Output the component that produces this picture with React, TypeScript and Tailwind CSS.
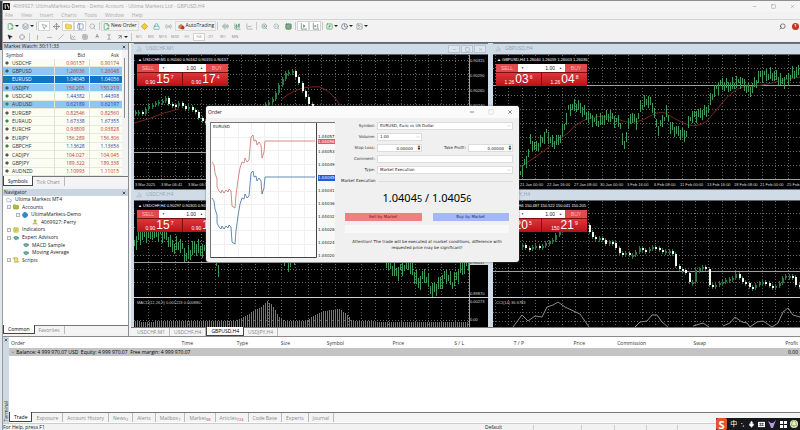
import { useState } from 'react';
import type { ReactNode } from 'react';
import {
  ArrowUpRight, AudioLines, Bell, BarChart2, ChartCandlestick, ChartLine, ChevronDown, Clock, Cloud, Crosshair,
  Diamond, FilePlus2, Folder, Globe, GraduationCap, Grid2x2, Grid3x3, Image, Layers, LineChart, Lock, Mic, Minus,
  MousePointer2, Move, PanelLeft, Radio, ScrollText, Search, Slash, Square, SquareFunction, TextCursor, User, X,
  ZoomIn, ZoomOut,
} from 'lucide-react';

type Quote = { symbol: string; bid: string; ask: string; up?: boolean; hl?: 'soft' | 'strong' };

const quotes: Quote[] = [
  { symbol: 'USDCHF', bid: '0.90157', ask: '0.90174' },
  { symbol: 'GBPUSD', bid: '1.26036', ask: '1.26048', hl: 'soft' },
  { symbol: 'EURUSD', bid: '1.04045', ask: '1.04056', hl: 'strong' },
  { symbol: 'USDJPY', bid: '150.205', ask: '150.219', hl: 'soft' },
  { symbol: 'USDCAD', bid: '1.44382', ask: '1.44398', up: true },
  { symbol: 'AUDUSD', bid: '0.62189', ask: '0.62197', up: true, hl: 'soft' },
  { symbol: 'EURGBP', bid: '0.82546', ask: '0.82560' },
  { symbol: 'EURAUD', bid: '1.67338', ask: '1.67355', up: true },
  { symbol: 'EURCHF', bid: '0.93809', ask: '0.93828' },
  { symbol: 'EURJPY', bid: '156.289', ask: '156.306' },
  { symbol: 'GBPCHF', bid: '1.13628', ask: '1.13656', up: true },
  { symbol: 'CADJPY', bid: '104.027', ask: '104.045' },
  { symbol: 'GBPJPY', bid: '189.322', ask: '189.338' },
  { symbol: 'AUDNZD', bid: '1.10993', ask: '1.11015' },
];

const usdchfLeft = [57, 57, 59, 54, 51, 50, 48, 47, 46, 43, 49, 50, 51, 48, 51, 54, 52, 55, 57, 63, 66, 67];
const usdchfRight = [49, 47, 44, 38, 30, 24, 18, 17, 16, 22, 28, 36, 42, 49, 52];
const usdjpy = [
  44, 47, 48, 46, 45, 46, 45, 42, 41, 39, 34, 30, 28, 26, 25, 24, 22, 21, 22, 24, 31, 36, 38, 37, 39, 43, 41, 42, 47, 52,
  53, 52, 54, 54, 51, 47, 49, 50, 48, 46, 47, 49, 51, 50, 50, 53, 65, 68, 69, 72, 81, 81, 69, 68, 66, 68, 84, 85, 84, 82,
  81, 79, 78, 77, 73, 77, 81, 82, 86, 87, 84, 82, 81, 82, 85, 86, 85, 82, 77, 75, 75, 76, 84, 85,
];
const gbpusd: number[][] = [
  [27, 118], [34, 103], [37, 86], [42, 93], [47, 88], [53, 78], [59, 88], [65, 86], [70, 75], [75, 54], [84, 50], [94, 61],
  [104, 67], [117, 61], [127, 69], [130, 94], [137, 62], [144, 67], [147, 52], [154, 45], [160, 52], [164, 76], [174, 56],
  [177, 72], [192, 81], [197, 62], [214, 56], [220, 37], [227, 29], [237, 31], [247, 26], [257, 36], [267, 20], [280, 20],
  [290, 27], [300, 19], [307, 15],
];
const usdchfH4: number[][] = [
  [0, 42], [8, 33], [24, 32], [32, 34], [38, 46], [46, 44], [52, 56], [60, 46], [70, 50], [78, 44], [84, 68], [90, 42],
  [120, 30], [155, 62], [170, 40], [230, 40], [252, 60], [262, 72], [274, 62], [284, 82], [290, 74], [298, 90], [306, 82],
  [312, 74], [318, 82], [326, 70], [334, 60],
];
const macd: number[][] = [
  [0, 6], [10, 5], [30, 6], [100, 6], [106, 8], [116, 14], [126, 19], [133, 26], [138, 22], [145, 10], [150, 6], [172, 6],
  [180, 12], [190, 16], [205, 18], [212, 13], [218, 6], [260, 5], [334, 5],
];
const tickRed: number[][] = [
  [1, 39], [3, 42], [4, 50], [6, 56], [6, 64], [8, 68], [10, 70], [11, 67], [13, 70], [15, 67], [17, 69], [18, 66], [20, 68],
  [21, 83], [24, 85], [25, 72], [27, 57], [29, 45], [31, 39], [33, 40], [34, 35], [36, 39], [38, 37], [40, 14], [42, 12],
  [43, 18], [45, 17], [46, 22], [48, 19], [50, 22], [51, 35], [53, 29], [54, 18], [104, 18],
];

function at(points: number[][], x: number) {
  for (let i = 1; i < points.length; i++) {
    const [x0, y0] = points[i - 1];
    const [x1, y1] = points[i];
    if (x <= x1) return y0 + ((y1 - y0) * (x - x0)) / (x1 - x0);
  }
  return points[points.length - 1][1];
}

const toLine = (points: number[][], dy = 0) => points.map(([x, y]) => `${x},${y + dy}`).join(' ');

function Candles({ data, x }: { data: number[]; x: number }) {
  return (
    <g shapeRendering="crispEdges">
      {data.map((y, i) => {
        const prev = i ? data[i - 1] : y;
        const down = y > prev;
        const cx = Math.round(x + (i * 10) / 3);
        const top = Math.min(prev, y);
        const h = Math.max(Math.abs(y - prev), 2);
        return (
          <g key={i} fill={down ? '#eefbf0' : '#2a7a45'}>
            <rect x={cx} y={top - 2} width="1" height={h + 4} fill="#2a7a45" />
            <rect x={cx} y={top} width="2" height={h} />
          </g>
        );
      })}
    </g>
  );
}

function Bars({ points, amp }: { points: number[][]; amp: number }) {
  const start = points[0][0];
  const end = points[points.length - 1][0];
  const out: string[] = [];
  for (let x = start, i = 0; x <= end; x += 2, i++) {
    const y = Math.round(at(points, x) + Math.sin(i * 2.3) * amp * 0.6);
    const r = Math.round(amp * (0.5 + Math.abs(Math.sin(i * 1.7))));
    out.push(`M${x + 0.5} ${y - r}V${y + r}`);
  }
  return <path d={out.join('')} stroke="#3f9a5c" strokeWidth="1" fill="none" />;
}

function GridLines({ w, h, x, rows }: { w: number; h: number; x: number; rows: number[] }) {
  const cols = [];
  for (let c = x; c < w; c += 40 / 3) cols.push(Math.round(c) + 0.5);
  return (
    <g stroke="#666" strokeWidth="1" strokeDasharray="1 2">
      {cols.map((c) => <line key={c} x1={c} x2={c} y1="0" y2={h} />)}
      {rows.map((r) => <line key={r} x1="0" x2={w} y1={r + 0.5} y2={r + 0.5} />)}
    </g>
  );
}

function OneClick({ base, sell, buy }: { base: string; sell: string[]; buy: string[] }) {
  const cell = 'flex h-[13px] items-end justify-center bg-linear-to-b from-[#e0343a] to-[#b80f16] pb-px text-white';
  return (
    <div className="absolute left-[3px] top-[9px] grid w-[91px] grid-cols-2 gap-px bg-[#7c0d11]">
      <div className="col-span-2 flex h-2 text-[5px] leading-2">
        <button className="w-[22px] bg-[#e04a4d] text-[#ffb9b9]">SELL</button>
        <div className="flex flex-1 items-center bg-white px-[3px]">
          <span className="text-[3px] text-[#333]">▼</span>
          <input aria-label="Lots" defaultValue="1.00" className="h-2 w-0 flex-1 px-1 text-right text-[#222] outline-none" />
          <span className="text-[3px] text-[#333]">▲</span>
        </div>
        <button className="w-[22px] bg-[#e04a4d] text-[#ffb9b9]">BUY</button>
      </div>
      {[sell, buy].map(([big, small]) => (
        <div key={big} className={cell}>
          <span className="text-[5px] leading-[6px]">{base}</span>
          <span className="pl-px text-[12px] leading-3">{big}</span>
          <span className="self-start pl-px text-[5px] leading-2">{small}</span>
        </div>
      ))}
    </div>
  );
}

function ChartWindow({ title, info, panel, controls, children }: {
  title: string; info: string; panel: ReactNode; controls?: boolean; children: ReactNode;
}) {
  return (
    <section className="flex min-w-0 flex-col border-t border-[#6f7780] bg-[#cfdbe6]">
      <div className="flex h-[10px] items-center gap-1 px-[2px] text-[5px] text-[#94a5b5]">
        <BarChart2 className="size-[6px]" />
        <h2 className="flex-1">{title}</h2>
        {controls && (
          <div className="flex gap-px text-[#8794a2]">
            <button aria-label="Minimize chart" className="flex h-2 w-3 items-center justify-center border border-[#b9c5d1] bg-[#dde6ee]"><Minus className="size-[5px]" /></button>
            <button aria-label="Maximize chart" className="flex h-2 w-3 items-center justify-center border border-[#b9c5d1] bg-[#dde6ee]"><Square className="size-[5px]" /></button>
            <button aria-label="Close chart" className="flex h-2 w-3 items-center justify-center border border-[#b9c5d1] bg-[#dde6ee]"><X className="size-[5px]" /></button>
          </div>
        )}
      </div>
      <div className="relative flex-1 border-t border-[#5b636b] bg-black font-['Liberation_Sans',sans-serif]">
        {children}
        <p className="absolute left-[3px] top-[2px] whitespace-nowrap bg-black px-px text-[4px] leading-[6px] text-white">▲ {info}</p>
        {panel}
      </div>
    </section>
  );
}

function Axis({ items, top, gap }: { items: string[]; top: string; gap: string }) {
  return (
    <div className={`absolute bottom-0 right-0 flex w-[18px] flex-col text-[4px] leading-[5px] text-[#ddd] ${top} ${gap}`}>
      {items.map((v) => <span key={v} className={v === '0.90157' ? 'bg-[#d8d8d8] text-black' : ''}>{v}</span>)}
    </div>
  );
}

function TimeAxis({ items }: { items: string[] }) {
  return (
    <div className="absolute bottom-[2px] left-px right-0 flex overflow-hidden text-[4px] leading-[5px] text-[#ddd]">
      {items.map((v, i) => (
        <span key={v} className={`whitespace-nowrap ${i === items.length - 1 ? 'w-3' : i % 3 ? 'w-[27px] shrink-0' : 'w-[26px] shrink-0'}`}>{v}</span>
      ))}
    </div>
  );
}

function Tabs({ items, active, className = '' }: { items: [string, string?][]; active: string; className?: string }) {
  return (
    <div className={`flex items-stretch border-t border-[#777] bg-[#f4f4f4] text-[5px] leading-2 text-[#8a8a8a] ${className}`}>
      {items.map(([t, sub]) => (
        <button
          key={t}
          className={t === active ? '-mt-px whitespace-nowrap border-x border-b border-[#444] bg-white px-1 text-black' : 'whitespace-nowrap border-r border-[#bbb] px-1'}
        >
          {t}{sub && <sub className={`text-[4px] leading-none ${sub.length > 1 ? 'text-[#d33]' : ''}`}>{sub}</sub>}
        </button>
      ))}
    </div>
  );
}

const Sep = () => <span className="mx-px h-2 w-px bg-[#c8c8c8]" />;
const Tool = ({ label, children, on, drop }: { label: string; children: ReactNode; on?: boolean; drop?: boolean }) => (
  <button aria-label={label} className={`flex h-[10px] items-center justify-center ${drop ? 'w-[15px] gap-px' : 'w-3'} ${on ? 'border border-[#d4d4d4] bg-white' : ''}`}>
    {children}
    {drop && <svg viewBox="0 0 4 2" className="h-[2px] w-1"><path d="M0 0h4L2 2z" fill="#222" /></svg>}
  </button>
);

function Toolbars() {
  const i = 'size-[7px]';
  return (
    <div className="border-b border-[#5f6871] bg-[#f2f2f2]">
      <div className="flex h-3 items-center pl-[2px] text-[5px] text-[#222]">
        <Tool label="New chart" drop><FilePlus2 className={`${i} text-[#2c9a4a]`} /></Tool>
        <Tool label="Profiles" drop><Layers className={`${i} text-[#6f8298]`} /></Tool>
        <Sep />
        <Tool label="Market Watch" on><MousePointer2 className={`${i} text-[#6a8a7a]`} /></Tool>
        <Tool label="Data Window"><Move className={`${i} text-[#666]`} /></Tool>
        <Tool label="Navigator" on><Folder className={`${i} fill-[#f4dc5a] text-[#c2a018]`} /></Tool>
        <Tool label="Terminal" on><PanelLeft className={`${i} text-[#4e6f94]`} /></Tool>
        <Tool label="Strategy Tester"><Search className={`${i} text-[#9a9a9a]`} /></Tool>
        <Sep />
        <button className="flex h-[10px] items-center gap-px border border-[#dcdcdc] px-px"><FilePlus2 className={`${i} text-[#2c9a4a]`} />New Order</button>
        <Tool label="MetaEditor"><Diamond className={`${i} fill-[#f3cf3a] text-[#b18c10]`} /></Tool>
        <Tool label="Options"><Lock className={`${i} text-[#3f9d9a]`} /></Tool>
        <Tool label="Signals"><Radio className={`${i} text-[#8fa4a4]`} /></Tool>
        <button className="flex h-[10px] items-center gap-px border border-[#dcdcdc] px-px">
          <svg viewBox="0 0 8 8" className="h-[7px] w-2"><path d="M1 3l3-2 3 2v3l-3 1-3-1z" fill="#b38a54" /><circle cx="6" cy="5.5" r="2" fill="#d3281e" /></svg>
          AutoTrading
        </button>
        <Sep />
        <Tool label="Bar chart"><AudioLines className={`${i} text-[#6c8a7a]`} /></Tool>
        <Tool label="Candlesticks"><ChartCandlestick className={`${i} text-[#3c8a5a]`} /></Tool>
        <Tool label="Line chart"><ChartLine className={`${i} text-[#7d8f87]`} /></Tool>
        <Sep />
        <Tool label="Zoom in"><ZoomIn className={`${i} text-[#5f9382]`} /></Tool>
        <Tool label="Zoom out"><ZoomOut className={`${i} text-[#8fa39a]`} /></Tool>
        <Tool label="Tile windows"><Grid2x2 className={`${i} fill-[#7fae86] text-[#3d6f52]`} /></Tool>
        <Sep />
        <Tool label="Auto scroll" on>
          <svg viewBox="0 0 8 8" className={i}><path d="M1.500 0v7H8M4 2l2 1.500L4 5z" fill="none" stroke="#7c9186" /></svg>
        </Tool>
        <Tool label="Chart shift" on>
          <svg viewBox="0 0 8 8" className={i}><path d="M1.500 0v7H8M6.500 1v5" fill="none" stroke="#7c9186" /><path d="M3 2l2 1.500L3 5z" fill="#4f7a64" /></svg>
        </Tool>
        <Sep />
        <Tool label="Indicators" drop><SquareFunction className={`${i} text-[#2c9a4a]`} /></Tool>
        <Tool label="Periods" drop><Clock className={`${i} text-[#3d4e66]`} /></Tool>
        <Tool label="Templates" drop><Image className={`${i} text-[#7b9184]`} /></Tool>
        <span className="flex-1" />
        <Tool label="Search"><Search className={`${i} -scale-x-100 text-[#333]`} /></Tool>
        <button aria-label="Notifications" className="ml-1 mr-px flex size-[7px] items-center justify-center rounded-full bg-[#c8321f] text-[4px] font-bold text-white">1</button>
      </div>
      <div className="flex h-[10px] items-center pl-px text-[4px] text-[#8c8c8c]">
        <Tool label="Cursor"><MousePointer2 className="size-[6px] fill-[#222] text-[#222]" /></Tool>
        <Tool label="Crosshair"><Crosshair className="size-[6px]" /></Tool>
        <Sep />
        <Tool label="Vertical line"><Minus className="size-[7px] rotate-90" /></Tool>
        <Tool label="Horizontal line"><Minus className="size-[7px]" /></Tool>
        <Tool label="Trendline"><Slash className="size-[6px] -scale-y-100 rotate-90" /></Tool>
        <Tool label="Channel"><LineChart className="size-[6px] text-[#666]" /></Tool>
        <Tool label="Fibonacci"><Grid3x3 className="size-[6px]" /></Tool>
        <Tool label="Text"><span className="text-[5px] text-[#555]">A</span></Tool>
        <Tool label="Text label"><TextCursor className="size-[6px] text-[#777]" /></Tool>
        <Tool label="Arrows" drop><ArrowUpRight className="size-[6px] text-[#333]" /></Tool>
        <Sep />
        {['M1', 'M5', 'M15', 'M30', 'H1', 'H4', 'D1', 'W1', 'MN'].map((p) => (
          <button key={p} className={`h-2 w-3 ${p === 'H4' ? 'border border-[#cfcfcf] bg-white' : ''}`}>{p}</button>
        ))}
      </div>
    </div>
  );
}

function PanelHead({ children }: { children: ReactNode }) {
  return (
    <div className="flex h-[7px] items-center justify-between bg-[#c9d6e2] px-px text-[5px] leading-[7px] text-[#222]">
      <h2>{children}</h2>
      <button aria-label="Close panel" className="pr-px text-[#111]"><X className="size-1" strokeWidth={4} /></button>
    </div>
  );
}

function MarketWatch() {
  return (
    <>
      <PanelHead>Market Watch: 30:11:33</PanelHead>
      <div className="flex bg-white">
        <table className="h-[126px] flex-1 border-collapse text-[5px] leading-[6px] text-[#333]">
          <thead>
            <tr className="h-[9px] bg-white">
              <th className="w-[51px] pl-[3px] text-left font-normal">Symbol</th>
              <th className="pr-1 text-right font-normal">Bid</th>
              <th className="pr-[3px] text-right font-normal">Ask</th>
            </tr>
          </thead>
          <tbody>
            {quotes.map((q) => {
              const bg = q.hl === 'strong' ? 'bg-[#1373c4] text-white' : q.hl === 'soft' ? 'bg-[#8cc6f3]' : 'bg-[#fbfcf2]';
              const tone = q.hl === 'strong' ? 'text-white' : q.up ? 'text-[#2a3fae]' : 'text-[#c0392f]';
              return (
                <tr key={q.symbol} className={`border-b border-[#e6e9dc] ${bg}`}>
                  <td className="border-r border-[#dfe3d6]">
                    <span className="flex items-center gap-[3px] pl-[2px]">
                      <Diamond className={`size-1 ${q.up || q.hl === 'strong' ? 'fill-[#2f8f3f] text-[#2f8f3f]' : 'fill-[#555] text-[#555]'}`} />
                      {q.symbol}
                    </span>
                  </td>
                  <td className={`border-r border-[#dfe3d6] pr-1 text-right ${tone}`}>{q.bid}</td>
                  <td className={`pr-[3px] text-right ${tone}`}>{q.ask}</td>
                </tr>
              );
            })}
          </tbody>
        </table>
        <div className="w-[6px] bg-[#f3f3f3] px-[2px] pt-2"><div className="h-[60px] w-px bg-[#8a8a8a]" /></div>
      </div>
      <Tabs className="h-[10px]" items={[['Symbols'], ['Tick Chart']]} active="Symbols" />
    </>
  );
}

function TreeRow({ depth, icon, children, box }: { depth: string; icon: ReactNode; children: ReactNode; box?: string }) {
  return (
    <li className={`flex items-center gap-[2px] whitespace-nowrap ${depth}`}>
      {box && <span className="flex size-1 items-center justify-center border border-[#b5b5b5] text-[3px] leading-none">{box}</span>}
      {icon}
      <span className="pl-px">{children}</span>
    </li>
  );
}

function Navigator() {
  const i = 'size-[6px]';
  const cap = <GraduationCap className={`${i} fill-[#6fae9f] text-[#3f7d72]`} />;
  return (
    <>
      <PanelHead>Navigator</PanelHead>
      <div className="flex-1 bg-white">
        <ul className="grid h-[68px] auto-rows-fr text-[5px] leading-[7px] text-[#222]">
          <TreeRow depth="pl-[3px]" icon={<Cloud className={`${i} text-[#5b8fd0]`} />}>Ultima Markets MT4</TreeRow>
          <TreeRow depth="pl-1" box="-" icon={<Folder className={`${i} fill-[#a9bf3a] text-[#758a1c]`} />}>Accounts</TreeRow>
          <TreeRow depth="pl-[13px]" box="-" icon={<Globe className={`${i} fill-[#4aa0e0] text-[#1c6db5]`} />}>UltimaMarkets-Demo</TreeRow>
          <TreeRow depth="pl-[29px]" icon={<User className={`${i} fill-[#c5cf3a] text-[#8a981c]`} />}>4069927: Perry</TreeRow>
          <TreeRow depth="pl-1" box="+" icon={<SquareFunction className={`${i} fill-[#e6e45a] text-[#a5a328]`} />}>Indicators</TreeRow>
          <TreeRow depth="pl-1" box="-" icon={cap}>Expert Advisors</TreeRow>
          <TreeRow depth="pl-5" icon={cap}>MACD Sample</TreeRow>
          <TreeRow depth="pl-5" icon={cap}>Moving Average</TreeRow>
          <TreeRow depth="pl-1" box="+" icon={<ScrollText className={`${i} fill-[#eedf5a] text-[#b0a028]`} />}>Scripts</TreeRow>
        </ul>
      </div>
      <Tabs className="mb-[2px] h-[9px]" items={[['Common'], ['Favorites']]} active="Common" />
    </>
  );
}

function Charts() {
  const macdBars = [];
  for (let x = 1; x < 334; x += 2) macdBars.push(`M${x + 0.5} 126V${126 - Math.round(at(macd, x))}`);
  return (
    <div className="grid grid-cols-[360fr_309fr] grid-rows-[146px_138px] bg-[#8f979f]">
      <div className="grid bg-[#cfdbe6] px-[3px]">
        <ChartWindow controls title="USDCHF,M1" info="USDCHF,M1 0.90160 0.90162 0.90155 0.90157" panel={<OneClick base="0.90" sell={['15', '7']} buy={['17', '4']} />}>
          <svg viewBox="0 0 354 133" preserveAspectRatio="none" className="block h-[133px] w-full">
            <GridLines w={335} h={124} x={14} rows={[5, 19, 34, 49, 63, 78, 93, 107, 121]} />
            <path d="M0 97.5H335M0 124.5H354M335.5 0V124" stroke="#a0a0a0" />
            <path d="M0 68L14 64L30 58L45 54M148 44C160 34 172 31 186 32C196 36 202 44 206 50" fill="none" stroke="#7a261e" />
            <Candles data={usdchfLeft} x={1} />
            <Candles data={usdchfRight} x={131} />
          </svg>
          <Axis top="top-[3px]" gap="gap-[10px]" items={['0.90315', '0.90290', '0.90265', '0.90240']} />
          <TimeAxis items={['3 Mar 2025', '3 Mar 06:41', '3 Mar 06:57', '']} />
        </ChartWindow>
      </div>
      <div className="grid bg-[#cfdbe6] pl-[2px]">
        <ChartWindow title="GBPUSD,H4" info="GBPUSD,H4 1.26040 1.26059 1.26003 1.26036" panel={<OneClick base="1.26" sell={['03', '6']} buy={['04', '8']} />}>
          <svg viewBox="0 0 307 133" preserveAspectRatio="none" className="block h-[133px] w-full">
            <GridLines w={307} h={124} x={2} rows={[13, 27, 40, 54, 68, 82, 96, 110]} />
            <path d="M0 30.5H307M0 124.5H307" stroke="#a0a0a0" />
            <path d="M27 112C50 98 60 88 75 78C90 60 110 58 130 66C150 72 160 54 172 58C190 68 200 76 214 66C230 48 236 36 250 32C270 32 290 24 307 22" fill="none" stroke="#7a261e" />
            <Bars points={gbpusd} amp={4} />
          </svg>
          <TimeAxis items={['16 Jan 2025', '21 Jan 00:00', '22 Jan 16:00', '27 Jan 08:00', '30 Jan 00:00', '3 Feb 16:00', '6 Feb 08:00', '11 Feb 00:00', '13 Feb 16:00', '18 Feb 08:00', '21 Feb 00:00', '25 Feb']} />
        </ChartWindow>
      </div>
      <div className="grid bg-[#cfdbe6] px-[3px]">
        <ChartWindow title="USDCHF,H4" info="USDCHF,H4 0.90297 0.90305 0.90151 0.90157" panel={<OneClick base="0.90" sell={['15', '7']} buy={['17', '4']} />}>
          <svg viewBox="0 0 354 126" preserveAspectRatio="none" className="block h-[126px] w-full">
            <GridLines w={335} h={126} x={14} rows={[12, 26, 40, 54, 68, 81, 119]} />
            <Bars points={usdchfH4} amp={5} />
            <path d="M0 61.5H335M335.5 0V126" stroke="#a0a0a0" />
            <path d="M0 96.5H354" stroke="#d0d0d0" />
            <path d={macdBars.join('')} stroke="#777" />
          </svg>
          <p className="absolute left-[3px] top-[99px] text-[4px] leading-[5px] text-[#ccc]">MACD(12,26,9) 0.001223 0.000880</p>
          <Axis top="top-[59px]" gap="gap-[26px]" items={['0.90157', '0.89870']} />
          <Axis top="top-[98px]" gap="gap-[13px]" items={['0.00273', '0.00']} />
        </ChartWindow>
      </div>
      <div className="grid bg-[#cfdbe6] pl-[2px]">
        <ChartWindow title="USDJPY,H4" info="USDJPY,H4 150.487 150.522 150.041 150.205" panel={<OneClick base="150" sell={['20', '5']} buy={['21', '9']} />}>
          <svg viewBox="0 0 307 126" preserveAspectRatio="none" className="block h-[126px] w-full">
            <GridLines w={307} h={126} x={2} rows={[12, 27, 40, 54, 67, 81, 111, 120]} />
            <path d="M0 70.5H307" stroke="#a0a0a0" />
            <path d="M0 96.5H307" stroke="#d0d0d0" />
            <Candles data={usdjpy} x={29} />
            <path d="M20 126L29 114L35 120L42 115L49 116L54 106L60 104L65 101L72 106L87 113L96 126M142 126L147 121L154 120L159 114L164 114L169 121L175 126M200 125L210 122L216 126M230 125L237 122L242 116L249 121L254 122L257 126L264 121L270 120L279 126L285 122L290 111L295 107L300 114L307 116" fill="none" stroke="#8c8c8c" />
          </svg>
          <p className="absolute left-[3px] top-[99px] text-[4px] leading-[5px] text-[#ccc]">CCI(14) 36.6783</p>
        </ChartWindow>
      </div>
    </div>
  );
}

function OrderDialog({ onClose }: { onClose: () => void }) {
  const label = 'whitespace-nowrap text-right text-[#333]';
  const box = 'border border-[#dcdcdc] bg-white';
  const field = `h-2 w-full min-w-0 appearance-none px-[2px] text-[#222] outline-none ${box}`;
  const spin = <span className="absolute right-[2px] top-px text-[3px] leading-[3px] text-[#222]">▲<br />▼</span>;
  const arrow = <ChevronDown className="absolute right-[2px] top-[2px] size-1 text-[#888]" />;
  return (
    <div role="dialog" aria-label="Order" className="absolute left-[206px] top-[105px] w-[313px] rounded-[3px] bg-[#f0f0f0] pb-1 font-['DejaVu_Sans',sans-serif] text-[4px] leading-[6px] text-[#222] shadow-[0_0_2px_#666]">
      <div className="flex h-3 items-center rounded-t-[3px] bg-[#fbfbfb] pl-[2px] pr-[6px] font-['Open_Sans',sans-serif] text-[5px]">
        <h2 className="flex-1">Order</h2>
        <div className="flex gap-[13px]">
          <button aria-label="Minimize"><Minus className="size-[6px]" /></button>
          <button aria-label="Maximize" className="text-[#ccc]"><Square className="size-[6px]" /></button>
          <button aria-label="Close" onClick={onClose}><X className="size-[6px]" /></button>
        </div>
      </div>
      <div className="flex pl-1 pr-[6px] pt-1">
        <div className="relative flex h-[136px] w-[125px] border-l border-t border-[#777]">
          <svg viewBox="0 0 106 135" className="h-[135px] w-[106px] bg-white">
            <path d="M0 14.5H105M0 27.5H105M0 41.5H105M0 68.5H105M0 81.5H105M0 94.5H105M0 107.5H105M0 121.5H105M13.5 0V135M27.5 0V135M40.5 0V135M53.5 0V135M67.5 0V135M80.5 0V135M93.5 0V135" stroke="#f0f0f0" />
            <path d="M105.5 0V134.5H0" fill="none" stroke="#444" />
            <polyline points={toLine(tickRed)} fill="none" stroke="#c9706a" strokeWidth=".8" />
            <polyline points={toLine(tickRed, 36)} fill="none" stroke="#3d6f9f" strokeWidth=".8" />
          </svg>
          <span className="absolute left-[2px] top-px">EURUSD</span>
          <div className="flex flex-1 flex-col gap-[7px] bg-[#f8f8f8] pl-px pt-[11px]">
            <div className="-mb-[2px] flex flex-col">
              <span className="leading-[5px]">1.04057</span>
              <span className="bg-[#e05a5e] leading-[5px] text-white">1.04056</span>
            </div>
            {['1.04053', '1.04049', '1.04045', '1.04041', '1.04036', '1.04032', '1.04028', '1.04024', '1.04020'].map((p) => (
              <span key={p} className={p === '1.04045' ? 'bg-[#1d5fcf] text-white' : ''}>{p}</span>
            ))}
          </div>
        </div>
        <form className="min-w-0 flex-1 pl-[6px]">
          <div className="grid grid-cols-[34px_45px_1fr_45px] items-center gap-x-[2px] gap-y-[3px]">
            <label htmlFor="symbol" className={label}>Symbol:</label>
            <div className="relative col-span-3">
              <select id="symbol" className={field}><option>EURUSD, Euro vs US Dollar</option></select>{arrow}
            </div>
            <label htmlFor="volume" className={label}>Volume:</label>
            <div className="relative col-span-3">
              <div className="relative w-[45px]"><select id="volume" className={field}><option>1.00</option></select>{arrow}</div>
            </div>
            <label htmlFor="sl" className={label}>Stop Loss:</label>
            <div className="relative"><input id="sl" defaultValue="0.00000" className={`${field} pr-2 text-right`} />{spin}</div>
            <label htmlFor="tp" className={label}>Take Profit:</label>
            <div className="relative"><input id="tp" defaultValue="0.00000" className={`${field} pr-2 text-right`} />{spin}</div>
            <label htmlFor="comment" className={label}>Comment:</label>
            <input id="comment" className={`${field} col-span-3`} />
            <label htmlFor="type" className={label}>Type:</label>
            <div className="relative col-span-3">
              <select id="type" className={field}><option>Market Execution</option></select>{arrow}
            </div>
          </div>
          <div className="mt-1 flex items-center gap-[2px] whitespace-nowrap">
            Market Execution<span className="h-px flex-1 bg-[#ddd]" />
          </div>
          <p className="mt-[6px] text-center font-['Noto_Sans',sans-serif] text-[11px] leading-4 text-black">
            1.0404<span className="text-[9px]">5</span> / 1.0405<span className="text-[9px]">6</span>
          </p>
          <div className="mt-[6px] flex gap-[11px] px-1 text-[#222]">
            <button type="button" className="h-2 flex-1 bg-[#f08080] text-[#7a1010]">Sell by Market</button>
            <button type="button" className="h-2 flex-1 bg-[#a3b8f5] text-[#1a2a7a]">Buy by Market</button>
          </div>
          <div className="mx-1 mt-1 h-2 bg-[#f8f8f8]" />
          <p className="mt-[6px] whitespace-nowrap text-center">
            Attention! The trade will be executed at market conditions, difference with<br />requested price may be significant!
          </p>
        </form>
      </div>
    </div>
  );
}

function Terminal() {
  const heads = [
    ['Order', 'w-[60px] text-left pl-[2px]'], ['Time', 'w-[124px] text-right'], ['Type', 'w-[55px] text-right'],
    ['Size', 'w-[42px] text-right'], ['Symbol', 'w-[54px] text-right'], ['Price', 'w-[60px] text-right'],
    ['S / L', 'w-[60px] text-right'], ['T / P', 'w-[60px] text-right'], ['Price', 'w-[61px] text-right'],
    ['Commission', 'w-[61px] text-right'], ['Swap', 'w-[60px] text-right'], ['Profit', 'pr-[2px] text-right'],
  ];
  return (
    <div className="flex h-[87px] border-t border-[#8a8a8a]">
      <div className="flex w-[6px] flex-col items-center justify-between bg-[#cdd9e4] py-px text-[5px] leading-[6px] text-[#222]">
        <X className="size-1" strokeWidth={4} />
        <h2 className="rotate-180 [writing-mode:vertical-rl]">Terminal</h2>
      </div>
      <div className="flex min-w-0 flex-1 flex-col bg-white">
        <table className="w-full table-fixed text-[5px] leading-2 text-[#333]">
          <thead>
            <tr className="h-[11px]">
              {heads.map(([h, c], i) => <th key={i} className={`font-normal ${c}`}>{h}</th>)}
            </tr>
          </thead>
          <tbody>
            <tr className="bg-[#c4c4c4] text-black">
              <td colSpan={11} className="pl-[3px]">◦ &nbsp;Balance: 4 999 970.07 USD &nbsp;Equity: 4 999 970.07 &nbsp;Free margin: 4 999 970.07</td>
              <td className="pr-[2px] text-right">0.00</td>
            </tr>
          </tbody>
        </table>
        <div className="flex-1" />
        <Tabs
          className="mb-px h-[10px]"
          active="Trade"
          items={[['Trade'], ['Exposure'], ['Account History'], ['News', '2'], ['Alerts'], ['Mailbox', '7'], ['Market', '98'], ['Articles', '724'], ['Code Base'], ['Experts'], ['Journal']]}
        />
      </div>
    </div>
  );
}

function ImeBar() {
  return (
    <div className="absolute bottom-0 right-0 flex h-3 w-[84px] items-center justify-between bg-[#17181c] pr-[2px] text-[7px] text-white font-['Noto_Sans','Noto_Sans_CJK_SC',sans-serif]">
      <span className="flex h-3 w-[11px] items-center justify-center rounded-[2px] bg-[#e8532b] text-[11px] font-bold leading-none">S</span>
      <span>中</span>
      <span>·,</span>
      <Mic className="size-[7px] fill-white" />
      <svg viewBox="0 0 8 8" className="size-[7px]"><path d="M0 1h8v6H0z" fill="#fff" /><path d="M1 3h6M1 5h6M3 2v4M5 2v4" stroke="#17181c" strokeWidth=".6" /></svg>
      <svg viewBox="0 0 8 8" className="size-2"><path d="M0 1l3 2 2 0 3-3-2 5-1 3H3L2 5z" fill="#b79be8" /></svg>
      <svg viewBox="0 0 8 8" className="size-[7px]"><path d="M0 0h3.500v3.500H0zM4.500 0H8v3.500H4.500zM0 4.500h3.500V8H0zM4.500 4.500H8V8H4.500z" fill="#fff" /></svg>
      <Bell className="size-2 rounded-full bg-[#e8f0c8] text-[#5f8f2f]" />
    </div>
  );
}

export default function App() {
  const [orderOpen, setOrderOpen] = useState(true);
  return (
    <div className="relative flex min-h-screen border-t border-[#8f8f8f] bg-[#f2f2f2] font-['Open_Sans','Noto_Sans',sans-serif] text-[5px]">
      <div className="w-[3px] shrink-0 border-r border-[#9a9a9a] bg-[#dfe5ea]"><div className="h-[49px] bg-[#3a3f44]" /></div>
      <div className="flex min-w-0 flex-1 flex-col">
        <header className="flex h-[11px] items-center gap-[3px] bg-[#f5f5f5] text-[5px] text-[#a5a5a5]">
          <svg viewBox="0 0 8 8" className="size-[7px]"><rect width="8" height="8" rx="1" fill="#111" /><path d="M2.500 1.500v4.500h1M5 1.500v2h1.500v3" fill="none" stroke="#fff" /></svg>
          <h1 className="flex-1">4069927: UltimaMarkets-Demo - Demo Account - Ultima Markets Ltd - GBPUSD,H4</h1>
          <div className="flex gap-[14px] pr-[5px] text-[#888]">
            <button aria-label="Minimize window"><Minus className="size-[5px]" /></button>
            <button aria-label="Restore window"><Square className="size-[5px]" /></button>
            <button aria-label="Close window"><X className="size-[5px]" /></button>
          </div>
        </header>
        <nav className="flex h-2 items-center gap-2 border-b border-[#d4d4d4] pl-[2px] text-[#aaa]">
          {['File', 'View', 'Insert', 'Charts', 'Tools', 'Window', 'Help'].map((m) => <button key={m}>{m}</button>)}
        </nav>
        <Toolbars />
        <div className="flex">
          <aside className="mr-[2px] flex w-[126px] shrink-0 flex-col border-r border-[#8a8f94]">
            <MarketWatch />
            <div className="h-[3px]" />
            <Navigator />
          </aside>
          <main className="min-w-0 flex-1">
            <Charts />
            <Tabs className="h-[9px] pl-[2px]" items={[['USDCHF,M1'], ['USDCHF,H4'], ['GBPUSD,H4'], ['USDJPY,H4']]} active="GBPUSD,H4" />
          </main>
        </div>
        <Terminal />
        <footer className="flex h-[7px] items-center border-t border-[#ccc] text-[5px] leading-[6px] text-[#222]">
          <span className="w-[482px]">For Help, press F1</span>
          <span className="w-[48px]">Default</span>
          {['w-[48px]', 'w-[33px]', 'w-[32px]', 'w-[31px]', 'w-[31px]'].map((w, i) => <span key={i} className={`h-[5px] border-l border-[#ccc] ${w}`} />)}
        </footer>
      </div>
      {orderOpen && <OrderDialog onClose={() => setOrderOpen(false)} />}
      <ImeBar />
    </div>
  );
}
